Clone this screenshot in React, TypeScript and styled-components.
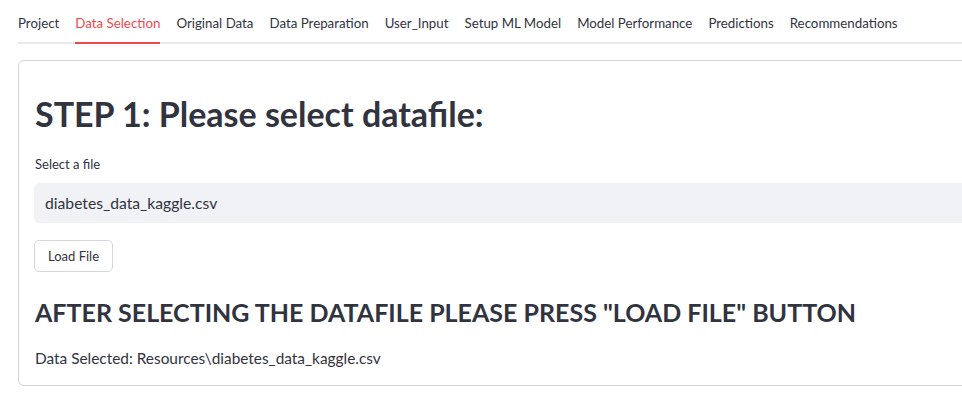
import React from "react";
import styled, { createGlobalStyle } from "styled-components";

const GlobalStyle = createGlobalStyle`
  html, body {
    margin: 0;
    padding: 0;
    background: #ffffff;
    overflow: hidden;
  }
  body {
    font-family: "Lato", "Noto Sans", sans-serif;
    color: #31333f;
  }
  * { box-sizing: border-box; }
`;

const Page = styled.div`
  width: 1040px;
  padding: 2px 0 0 18px;
  display: flex;
  flex-direction: column;
  gap: 16px;
`;

const TabList = styled.div`
  display: flex;
  gap: 16px;
  box-shadow: inset 0 -2px 0 #e8e9ec;
`;

const Tab = styled.div<{ $active?: boolean }>`
  height: 42px;
  display: flex;
  align-items: center;
  font-size: 13.3px;
  white-space: nowrap;
  color: ${(p) => (p.$active ? "#f0474c" : "#31333f")};
  border-bottom: 2px solid ${(p) => (p.$active ? "#f0474c" : "transparent")};
  padding-top: 2px;
`;

const Card = styled.div`
  border: 1px solid #d5d6d9;
  border-radius: 6px;
  padding: 32px 16px 15px 15px;
  display: flex;
  flex-direction: column;
  align-items: flex-start;
`;

const Title = styled.h1`
  margin: 0 0 0 1px;
  font-size: 34px;
  font-weight: 700;
  line-height: 41px;
  color: #31333f;
  white-space: nowrap;
`;

const Label = styled.label`
  margin: 20px 0 0 1px;
  font-size: 13px;
  line-height: 20px;
  color: #31333f;
`;

const SelectBox = styled.div`
  margin-top: 9px;
  align-self: stretch;
  height: 40px;
  background: #f0f2f6;
  border-radius: 6px;
  display: flex;
  align-items: center;
  padding-left: 11px;
  font-size: 15.7px;
  color: #31333f;
`;

const Button = styled.button`
  margin-top: 17px;
  height: 32px;
  width: 79px;
  padding: 0;
  background: #ffffff;
  border: 1px solid #d5d6d9;
  border-radius: 5px;
  font-family: "Lato", "Noto Sans", sans-serif;
  font-size: 13px;
  color: #31333f;
`;

const Subtitle = styled.h2`
  margin: 25px 0 0 1px;
  font-size: 25px;
  font-weight: 700;
  line-height: 30px;
  color: #31333f;
  white-space: nowrap;
`;

const Text = styled.p`
  margin: 19px 0 0 1px;
  font-size: 15.4px;
  line-height: 24px;
  color: #31333f;
`;

const tabs = [
  "Project",
  "Data Selection",
  "Original Data",
  "Data Preparation",
  "User_Input",
  "Setup ML Model",
  "Model Performance",
  "Predictions",
  "Recommendations",
];

export default function App() {
  return (
    <>
      <GlobalStyle />
      <Page>
        <TabList>
          {tabs.map((t) => (
            <Tab key={t} $active={t === "Data Selection"}>
              {t}
            </Tab>
          ))}
        </TabList>
        <Card>
          <Title>STEP 1: Please select datafile:</Title>
          <Label>Select a file</Label>
          <SelectBox>diabetes_data_kaggle.csv</SelectBox>
          <Button>Load File</Button>
          <Subtitle>AFTER SELECTING THE DATAFILE PLEASE PRESS "LOAD FILE" BUTTON</Subtitle>
          <Text>Data Selected: Resources\diabetes_data_kaggle.csv</Text>
        </Card>
      </Page>
    </>
  );
}
